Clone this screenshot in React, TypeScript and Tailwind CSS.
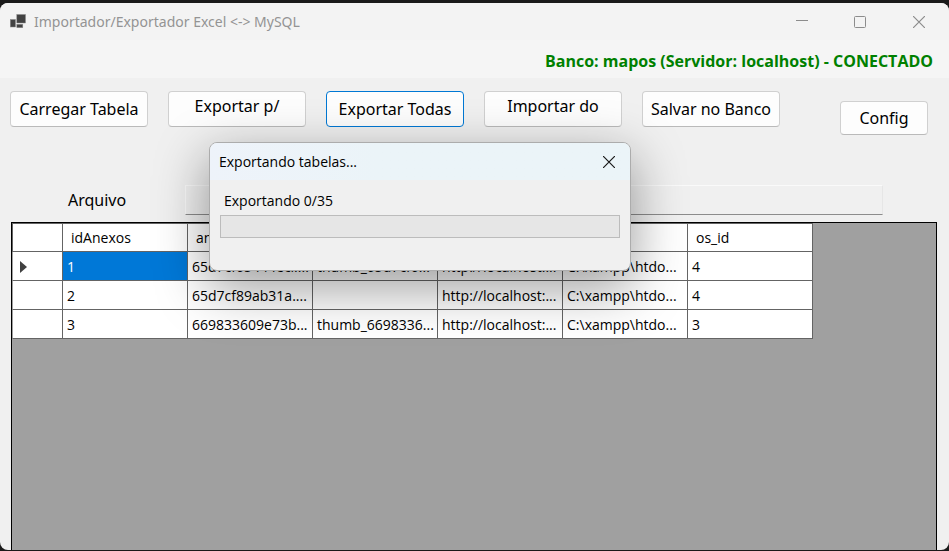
import type { ReactNode } from "react";
import clsx from "clsx";

const columns = ["idAnexos", "anexo", "thumb", "url", "path", "os_id"];

const rows = [
  ["1", "65d7cf65444eci....", "thumb_65d7cf6...", "http://localhost:...", "C:\\xampp\\htdo...", "4"],
  ["2", "65d7cf89ab31a....", "", "http://localhost:...", "C:\\xampp\\htdo...", "4"],
  ["3", "669833609e73b...", "thumb_6698336...", "http://localhost:...", "C:\\xampp\\htdo...", "3"],
];

function ToolButton({ children, active, raised }: { children: ReactNode; active?: boolean; raised?: boolean }) {
  return (
    <button
      type="button"
      className={clsx(
        "flex h-9 w-[138px] items-center justify-center rounded border bg-[#fdfdfd] font-['Noto_Sans',sans-serif] text-[16px] leading-5 whitespace-nowrap",
        active ? "border-[#0078d4]" : "border-[#d0d0d0] border-b-[#bababa]",
        raised && "pb-[6px]",
      )}
    >
      {children}
    </button>
  );
}

function TitleBar() {
  return (
    <header className="flex h-[37px] shrink-0 items-center bg-[#f3f3f3] pl-[10px] text-[#949494]">
      <svg width="16" height="15" viewBox="0 0 16 15" aria-hidden="true">
        <g fill="#424242" stroke="#8a8a8a" strokeWidth="0.5">
          <rect x="0.3" y="5.5" width="5.2" height="7.5" />
          <rect x="6.8" y="0.5" width="8.7" height="8.5" />
          <rect x="6.8" y="10.3" width="6" height="3.4" />
        </g>
      </svg>
      <h1 className="ml-2 font-['Noto_Sans',sans-serif] text-[14px] leading-5">Importador/Exportador Excel &lt;-&gt; MySQL</h1>
      <div className="ml-auto flex h-full">
        <button type="button" aria-label="Minimizar" className="flex w-[58px] items-center justify-center">
          <svg width="12" height="12" viewBox="0 0 12 12" stroke="#8c8c8c">
            <path d="M0 4.5h12" />
          </svg>
        </button>
        <button type="button" aria-label="Maximizar" className="flex w-[58px] items-center justify-center">
          <svg width="12" height="12" viewBox="0 0 12 12" fill="none" stroke="#8c8c8c">
            <rect x="0.5" y="0.5" width="11" height="11" rx="1" />
          </svg>
        </button>
        <button type="button" aria-label="Fechar" className="flex w-[60px] items-center justify-center">
          <svg width="12" height="12" viewBox="0 0 12 12" stroke="#8c8c8c" strokeWidth="1.2">
            <path d="M0 0l12 12M12 0L0 12" />
          </svg>
        </button>
      </div>
    </header>
  );
}

function DataGrid() {
  return (
    <div className="mt-[7px] mr-3 ml-[11px] min-h-0 grow overflow-hidden border border-b-0 border-black bg-[#a0a0a0]">
      <table className="w-[801px] table-fixed border-separate border-spacing-0 bg-white text-left text-[14px] leading-5">
        <colgroup>
          <col className="w-[51px]" />
          <col span={6} />
        </colgroup>
        <thead>
          <tr className="h-[29px]">
            <td className="border border-[#646464] p-0" />
            {columns.map((name) => (
              <th key={name} scope="col" className="border-t border-r border-b border-[#646464] py-0 pr-1 pl-2 font-normal">
                {name}
              </th>
            ))}
          </tr>
        </thead>
        <tbody>
          {rows.map((row, index) => (
            <tr key={row[0]} className="h-[29px]">
              <td className="border-r border-b border-l border-[#646464] border-l-[#a0a0a0] pt-[2px] pr-0 pb-0 pl-[7px]">
                {index === 0 && (
                  <svg width="7" height="12" viewBox="0 0 7 12" aria-label="Linha atual" className="block">
                    <path d="M0 0l7 6-7 6z" fill="#404040" />
                  </svg>
                )}
              </td>
              {row.map((value, column) => (
                <td
                  key={column}
                  className={clsx(
                    "overflow-hidden border-r border-b border-[#646464] pt-[2px] pr-0 pb-0 pl-1 whitespace-nowrap",
                    index === 0 && column === 0 && "bg-[#0078d7] text-white",
                  )}
                >
                  {value}
                </td>
              ))}
            </tr>
          ))}
        </tbody>
      </table>
    </div>
  );
}

function ExportDialog() {
  return (
    <section
      role="dialog"
      aria-labelledby="export-title"
      className="absolute top-[142px] left-[209px] h-[129px] w-[422px] overflow-hidden rounded-lg border border-[#acacac] bg-[#f0f0f0] shadow-[0_16px_52px_2px_rgba(0,0,0,0.38)]"
    >
      <header className="flex h-[37px] items-center justify-between bg-linear-to-r from-[#eef3fa] to-[#ebf4f8] to-40% pl-[9px]">
        <h2 id="export-title" className="text-[14px] leading-5">Exportando tabelas...</h2>
        <button type="button" aria-label="Fechar" className="flex h-full w-[42px] items-center justify-center">
          <svg width="12" height="12" viewBox="0 0 12 12" stroke="#1a1a1a" strokeWidth="1.2">
            <path d="M0 0l12 12M12 0L0 12" />
          </svg>
        </button>
      </header>
      <div className="px-[10px] pt-[11px]">
        <label htmlFor="export-progress" className="block pl-1 text-[14px] leading-5">
          Exportando 0/35
        </label>
        <progress
          id="export-progress"
          value={0}
          max={35}
          className="mt-1 block h-[23px] w-full appearance-none border border-[#bcbcbc] bg-[#e6e6e6] [&::-webkit-progress-bar]:bg-[#e6e6e6]"
        />
      </div>
    </section>
  );
}

export default function App() {
  return (
    <div className="h-screen overflow-hidden bg-[#1a1a1a] font-['Open_Sans','Noto_Sans',sans-serif] text-black">
      <main className="relative flex h-full flex-col overflow-hidden pt-[3px] pb-px">
        <div className="flex min-h-0 grow flex-col overflow-hidden rounded-lg bg-[#f0f0f0]">
          <TitleBar />
          <div className="flex h-[38px] shrink-0 items-center justify-end bg-[#f5f5f5] pt-1 pr-4 text-[16px] leading-5 font-bold text-[#008000]">
            Banco: mapos (Servidor: localhost) - CONECTADO
          </div>
          <div className="flex shrink-0 items-start justify-between pt-[13px] pr-[21px] pl-[10px]">
            <div className="flex gap-5">
              <ToolButton>Carregar Tabela</ToolButton>
              <ToolButton raised>Exportar p/</ToolButton>
              <ToolButton active>Exportar Todas</ToolButton>
              <ToolButton raised>Importar do</ToolButton>
              <ToolButton>Salvar no Banco</ToolButton>
            </div>
            <button
              type="button"
              className="mt-[10px] flex h-[34px] w-[88px] items-center justify-center rounded border border-[#d0d0d0] border-b-[#bababa] bg-[#fdfdfd] font-['Noto_Sans',sans-serif] text-[16px] leading-5"
            >
              Config
            </button>
          </div>
          <div className="mt-[50px] flex shrink-0 items-center pr-[66px] pl-[68px]">
            <label htmlFor="file-path" className="w-[117px] font-['Noto_Sans',sans-serif] text-[16px] leading-5">
              Arquivo
            </label>
            <input
              id="file-path"
              type="text"
              readOnly
              className="h-[30px] min-w-0 grow border border-[#fafafa] border-r-[#e6e6e6] border-b-[#8c8c8c] bg-[#f0f0f0] px-1 text-[16px]"
            />
          </div>
          <DataGrid />
        </div>
        <ExportDialog />
      </main>
    </div>
  );
}
